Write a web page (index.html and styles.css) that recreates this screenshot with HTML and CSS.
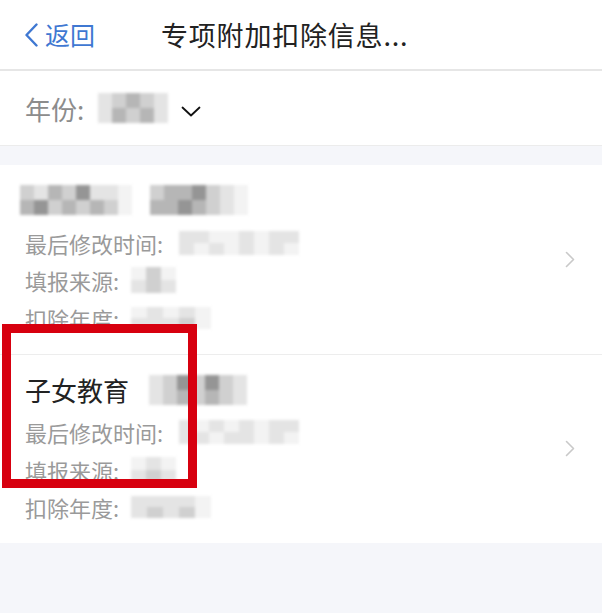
FILE: index.html
```html
<!DOCTYPE html>
<html lang="zh-CN">
  <head>
    <meta charset="UTF-8" />
    <meta name="viewport" content="width=device-width, initial-scale=1.0" />
    <title>专项附加扣除信息</title>
    <link rel="stylesheet" href="styles.css">
  </head>
  <body>
    <div class="page">
      <header class="nav">
        <a class="back">
          <svg class="back-icon" viewBox="0 0 15 24" width="15" height="24">
            <path d="M12.5 1.5 L2.5 12 L12.5 22.5" fill="none" stroke="#3f78d2" stroke-width="2.4" stroke-linecap="round" stroke-linejoin="round"/>
          </svg>
          <span>返回</span>
        </a>
        <h1 class="nav-title">专项附加扣除信息...</h1>
      </header>

      <div class="year-bar">
        <span class="year-label">年份:</span>
        <span class="mosaic mosaic-year">
          <i class="m1"></i><i class="m2"></i><i class="m3"></i><i class="m2"></i><i class="m1"></i>
          <i class="m1"></i><i class="m3"></i><i class="m2"></i><i class="m3"></i><i class="m1"></i>
        </span>
        <svg class="caret-down" viewBox="0 0 20 11" width="20" height="11">
          <path d="M1.5 1.5 L10 9.5 L18.5 1.5" fill="none" stroke="#111" stroke-width="1.8" stroke-linecap="round" stroke-linejoin="round"/>
        </svg>
      </div>

      <div class="spacer"></div>

      <ul class="records">
        <li class="record">
          <div class="record-body">
            <div class="record-title">
              <span class="mosaic mosaic-name">
                <i class="m2"></i><i class="m1"></i><i class="m3"></i><i class="m2"></i><i class="m4"></i><i class="m1"></i><i class="m1"></i><i class="m0"></i>
                <i class="m3"></i><i class="m4"></i><i class="m2"></i><i class="m3"></i><i class="m2"></i><i class="m3"></i><i class="m2"></i><i class="m0"></i>
              </span>
              <span class="mosaic mosaic-kind">
                <i class="m2"></i><i class="m3"></i><i class="m3"></i><i class="m4"></i><i class="m2"></i><i class="m1"></i><i class="m0"></i>
                <i class="m3"></i><i class="m3"></i><i class="m4"></i><i class="m3"></i><i class="m2"></i><i class="m1"></i><i class="m0"></i>
              </span>
            </div>
            <p class="record-line">
              <span>最后修改时间:</span>
              <span class="mosaic mosaic-time">
                <i class="m1"></i><i class="m1"></i><i class="m0"></i><i class="m0"></i><i class="m1"></i><i class="m0"></i><i class="m1"></i><i class="m1"></i>
                <i class="m1"></i><i class="m0"></i><i class="m1"></i><i class="m0"></i><i class="m1"></i><i class="m0"></i><i class="m1"></i><i class="m0"></i>
              </span>
            </p>
            <p class="record-line">
              <span>填报来源:</span>
              <span class="mosaic mosaic-source">
                <i class="m0"></i><i class="m2"></i><i class="m0"></i>
                <i class="m1"></i><i class="m2"></i><i class="m1"></i>
              </span>
            </p>
            <p class="record-line">
              <span>扣除年度:</span>
              <span class="mosaic mosaic-year-small">
                <i class="m0"></i><i class="m1"></i><i class="m0"></i><i class="m1"></i><i class="m0"></i>
                <i class="m1"></i><i class="m1"></i><i class="m1"></i><i class="m2"></i><i class="m0"></i>
              </span>
            </p>
          </div>
          <svg class="chevron" viewBox="0 0 10 17" width="10" height="17">
            <path d="M1.5 1.5 L8.5 8.5 L1.5 15.5" fill="none" stroke="#c9c9c9" stroke-width="1.6" stroke-linecap="round" stroke-linejoin="round"/>
          </svg>
        </li>

        <li class="record">
          <div class="record-body">
            <div class="record-title">
              <span class="record-name">子女教育</span>
              <span class="mosaic mosaic-kind">
                <i class="m1"></i><i class="m2"></i><i class="m4"></i><i class="m2"></i><i class="m4"></i><i class="m2"></i><i class="m1"></i>
                <i class="m1"></i><i class="m2"></i><i class="m3"></i><i class="m2"></i><i class="m3"></i><i class="m2"></i><i class="m1"></i>
              </span>
            </div>
            <p class="record-line">
              <span>最后修改时间:</span>
              <span class="mosaic mosaic-time">
                <i class="m1"></i><i class="m0"></i><i class="m1"></i><i class="m0"></i><i class="m1"></i><i class="m0"></i><i class="m1"></i><i class="m1"></i>
                <i class="m1"></i><i class="m1"></i><i class="m0"></i><i class="m1"></i><i class="m1"></i><i class="m0"></i><i class="m1"></i><i class="m0"></i>
              </span>
            </p>
            <p class="record-line">
              <span>填报来源:</span>
              <span class="mosaic mosaic-source">
                <i class="m0"></i><i class="m1"></i><i class="m0"></i>
                <i class="m1"></i><i class="m2"></i><i class="m1"></i>
              </span>
            </p>
            <p class="record-line">
              <span>扣除年度:</span>
              <span class="mosaic mosaic-year-small">
                <i class="m1"></i><i class="m1"></i><i class="m1"></i><i class="m1"></i><i class="m0"></i>
                <i class="m1"></i><i class="m2"></i><i class="m1"></i><i class="m2"></i><i class="m0"></i>
              </span>
            </p>
          </div>
          <svg class="chevron" viewBox="0 0 10 17" width="10" height="17">
            <path d="M1.5 1.5 L8.5 8.5 L1.5 15.5" fill="none" stroke="#c9c9c9" stroke-width="1.6" stroke-linecap="round" stroke-linejoin="round"/>
          </svg>
        </li>
      </ul>

      <div class="highlight"></div>
    </div>
  </body>
</html>
```

FILE: styles.css
```css
body {
    margin: 0;
    padding: 0;
    background-color: #f5f6fa;
    font-family: "Noto Sans CJK SC", "Noto Sans", sans-serif;
    color: #222;
}
.page {
    position: relative;
    width: 602px;
    min-height: 613px;
}
.nav {
    display: flex;
    align-items: center;
    height: 69px;
    padding-left: 24px;
    background-color: #fff;
    border-bottom: 2px solid #e6e6e6;
}
.back {
    display: flex;
    align-items: center;
    gap: 6px;
    color: #3f78d2;
    font-size: 25px;
    line-height: 1;
}
.back-icon {
    display: block;
}
.nav-title {
    margin: 0 0 0 66px;
    font-size: 27px;
    font-weight: 400;
    letter-spacing: 0.8px;
    color: #222;
    line-height: 1;
}
.year-bar {
    display: flex;
    align-items: center;
    height: 74px;
    padding-left: 25px;
    background-color: #fff;
    border-bottom: 1px solid #ececec;
}
.year-label {
    font-size: 26px;
    color: #8c8c8c;
}
.caret-down {
    margin-left: 13px;
    margin-top: 6px;
}
.spacer {
    height: 19px;
}
.records {
    list-style: none;
    margin: 0;
    padding: 0;
    background-color: #fff;
}
.record {
    display: flex;
    align-items: center;
    padding: 17px 27px 17px 25px;
}
.record + .record {
    border-top: 1px solid #ededed;
}
.record-body {
    flex: 1;
}
.record-title {
    display: flex;
    align-items: center;
    height: 36px;
    margin-bottom: 6px;
}
.record-name {
    font-size: 26px;
    color: #222;
    margin-right: 20px;
}
.record-line {
    display: flex;
    align-items: center;
    height: 37.5px;
    margin: 0;
    font-size: 22px;
    color: #9a9a9a;
}
.chevron {
    flex-shrink: 0;
}

/* pixelated (blurred) values */
.mosaic {
    display: inline-grid;
    filter: blur(1.8px);
}
.mosaic i {
    display: block;
}
.m0 { background-color: #f3f3f3; }
.m1 { background-color: #e4e4e4; }
.m2 { background-color: #d0d0d0; }
.m3 { background-color: #b6b6b6; }
.m4 { background-color: #959595; }

.mosaic-year {
    grid-template-columns: repeat(5, 14px);
    grid-auto-rows: 15px;
    margin-left: 14px;
}
.mosaic-name {
    grid-template-columns: repeat(8, 14px);
    grid-auto-rows: 15px;
    margin-left: -5px;
    margin-right: 18px;
}
.mosaic-kind {
    grid-template-columns: repeat(7, 14px);
    grid-auto-rows: 15px;
}
.mosaic-time {
    grid-template-columns: repeat(8, 15px);
    grid-auto-rows: 12px;
    margin-left: 16px;
}
.mosaic-source {
    grid-template-columns: repeat(3, 15px);
    grid-auto-rows: 13px;
    margin-left: 12px;
}
.mosaic-year-small {
    grid-template-columns: repeat(5, 16px);
    grid-auto-rows: 11px;
    margin-left: 12px;
}

/* red annotation frame */
.highlight {
    position: absolute;
    left: 2px;
    top: 324px;
    width: 195px;
    height: 164px;
    box-sizing: border-box;
    border: 9px solid #d7000f;
}
```
